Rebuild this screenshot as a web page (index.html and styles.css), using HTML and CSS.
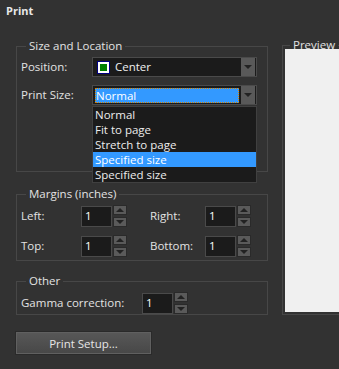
FILE: index.html
```html
<!DOCTYPE html>
<html lang="en">
<head>
    <meta charset="UTF-8">
    <meta name="viewport" content="width=device-width, initial-scale=1.0">
    <title>Print</title>
    <link rel="stylesheet" href="styles.css">
</head>
<body>

    <div class="title">Print</div>

    <div class="main">
        <div class="left-col">

            <fieldset class="group size-group">
                <legend>Size and Location</legend>
                <div class="row">
                    <span class="label">Position:</span>
                    <div class="combo">
                        <span class="combo-value">
                            <span class="pos-icon"><span></span></span>
                            Center
                        </span>
                        <span class="combo-btn"></span>
                    </div>
                </div>
                <div class="row">
                    <span class="label">Print Size:</span>
                    <div class="combo open">
                        <span class="combo-value selected">Normal</span>
                        <span class="combo-btn"></span>
                        <!-- open list -->
                        <div class="dropdown">
                            <div class="item">Normal</div>
                            <div class="item">Fit to page</div>
                            <div class="item">Stretch to page</div>
                            <div class="item active">Specified size</div>
                            <div class="item">Specified size</div>
                        </div>
                    </div>
                </div>
            </fieldset>

            <fieldset class="group margins-group">
                <legend>Margins (inches)</legend>
                <div class="row">
                    <div class="field">
                        <span class="label">Left:</span>
                        <span class="num">1</span>
                        <span class="spin"><span class="up"></span><span class="down"></span></span>
                    </div>
                    <div class="field">
                        <span class="label">Right:</span>
                        <span class="num">1</span>
                        <span class="spin"><span class="up"></span><span class="down"></span></span>
                    </div>
                </div>
                <div class="row">
                    <div class="field">
                        <span class="label">Top:</span>
                        <span class="num">1</span>
                        <span class="spin"><span class="up"></span><span class="down"></span></span>
                    </div>
                    <div class="field">
                        <span class="label">Bottom:</span>
                        <span class="num">1</span>
                        <span class="spin"><span class="up"></span><span class="down"></span></span>
                    </div>
                </div>
            </fieldset>

            <fieldset class="group other-group">
                <legend>Other</legend>
                <div class="row">
                    <span class="label gamma">Gamma correction:</span>
                    <span class="num">1</span>
                    <span class="spin"><span class="up"></span><span class="down"></span></span>
                </div>
            </fieldset>

            <button class="setup-btn">Print Setup...</button>
        </div>

        <fieldset class="group preview-group">
            <legend>Preview</legend>
            <div class="paper"></div>
        </fieldset>
    </div>

</body>
</html>
```

FILE: styles.css
```css
body {
    margin: 0;
    background-color: #323232;
    color: #e2e2e2;
    font-family: 'Open Sans', 'Liberation Sans', sans-serif;
    font-size: 11.5px;
    line-height: 16px;
    overflow: hidden;
    height: 369px;
}

.title {
    height: 30px;
    padding: 3px 0 0 6px;
    box-sizing: border-box;
    font-weight: bold;
    font-size: 11px;
    color: #e8e8e8;
}

.main {
    display: flex;
    gap: 14px;
    margin-top: 8px;
    padding-left: 16px;
}

.left-col {
    width: 252px;
    flex-shrink: 0;
    display: flex;
    flex-direction: column;
}

.group {
    margin: 0;
    border: 1px solid #474747;
    padding: 2px 4px 0 4px;
    min-width: 0;
    box-sizing: border-box;
}

.group legend {
    margin-left: 5px;
    padding: 0 3px;
    line-height: 16px;
}

.row {
    display: flex;
    align-items: center;
}

.label {
    flex-shrink: 0;
}

/* size and location */
.size-group {
    height: 134px;
}

.size-group .row {
    height: 20px;
    margin-top: 1px;
}

.size-group .row + .row {
    margin-top: 8px;
}

.size-group .label {
    width: 71px;
}

.combo {
    position: relative;
    width: 165px;
    height: 20px;
    box-sizing: border-box;
    border: 1px solid #4a4a4a;
    background-color: #1b1b1b;
    display: flex;
    align-items: stretch;
}

.combo-value {
    flex: 1;
    display: flex;
    align-items: center;
    gap: 5px;
    padding-left: 4px;
    color: #f0f0f0;
}

.combo-value.selected {
    margin: 2px 2px 1px 2px;
    padding-left: 1px;
    background-color: #3399ff;
    outline: 1px dotted #d98400;
    outline-offset: -1px;
    color: #ffffff;
}

.pos-icon {
    width: 13px;
    height: 13px;
    box-sizing: border-box;
    border: 1px solid #000080;
    background-color: #ffffff;
    display: flex;
    justify-content: center;
    align-items: center;
}

.pos-icon span {
    width: 7px;
    height: 7px;
    background-color: #008000;
}

.combo-btn {
    width: 14px;
    margin-right: 1px;
    background-color: #595959;
    display: flex;
    justify-content: center;
    align-items: center;
}

.combo-btn::after {
    content: "";
    border-left: 4px solid transparent;
    border-right: 4px solid transparent;
    border-top: 4px solid #222;
}

.dropdown {
    position: absolute;
    top: 20px;
    left: -1px;
    width: 165px;
    box-sizing: border-box;
    border: 1px solid #404040;
    background-color: #1b1b1b;
    z-index: 2;
}

.item {
    height: 15px;
    line-height: 15px;
    padding-left: 2px;
    color: #ececec;
}

.item.active {
    background-color: #3399ff;
    color: #ffffff;
}

/* number fields */
.num {
    width: 31px;
    height: 21px;
    box-sizing: border-box;
    border: 1px solid #4a4a4a;
    background-color: #1b1b1b;
    color: #ffffff;
    padding: 1px 0 0 3px;
    line-height: 16px;
}

.spin {
    display: flex;
    flex-direction: column;
    gap: 2px;
    margin-left: 1px;
}

.spin span {
    width: 14px;
    height: 10px;
    box-sizing: border-box;
    border: 1px solid #2a2a2a;
    background-color: #5a5a5a;
    display: flex;
    justify-content: center;
    align-items: center;
}

.spin .up::after {
    content: "";
    border-left: 4px solid transparent;
    border-right: 4px solid transparent;
    border-bottom: 4px solid #222;
}

.spin .down::after {
    content: "";
    border-left: 4px solid transparent;
    border-right: 4px solid transparent;
    border-top: 4px solid #222;
}

/* margins */
.margins-group {
    margin-top: 14px;
    height: 75px;
}

.margins-group .row {
    margin-top: 1px;
}

.margins-group .row + .row {
    margin-top: 8px;
}

.field {
    display: flex;
    align-items: center;
}

.field:first-child {
    width: 129px;
}

.field:first-child .label {
    width: 60px;
}

.field:last-child .label {
    width: 55px;
}

/* other */
.other-group {
    margin-top: 12px;
    height: 42px;
}

.other-group .row {
    margin-top: 1px;
}

.gamma {
    width: 121px;
}

.setup-btn {
    margin: 16px 0 0 -1px;
    width: 137px;
    height: 24px;
    border: 1px solid #2a2a2a;
    box-shadow: inset 0 0 0 1px #606060;
    background: linear-gradient(#585858, #474747);
    color: #e6e6e6;
    font-family: inherit;
    font-size: 11.5px;
    padding: 0;
}

/* preview */
.preview-group {
    width: 80px;
    height: 277px;
    flex-shrink: 0;
    padding: 0 2px 2px 2px;
    display: flex;
    flex-direction: column;
}

.preview-group legend {
    position: relative;
    z-index: 1;
    line-height: 14px;
}

.paper {
    flex: 1;
    margin-top: -3px;
    background-color: #f0f0f0;
}
```
